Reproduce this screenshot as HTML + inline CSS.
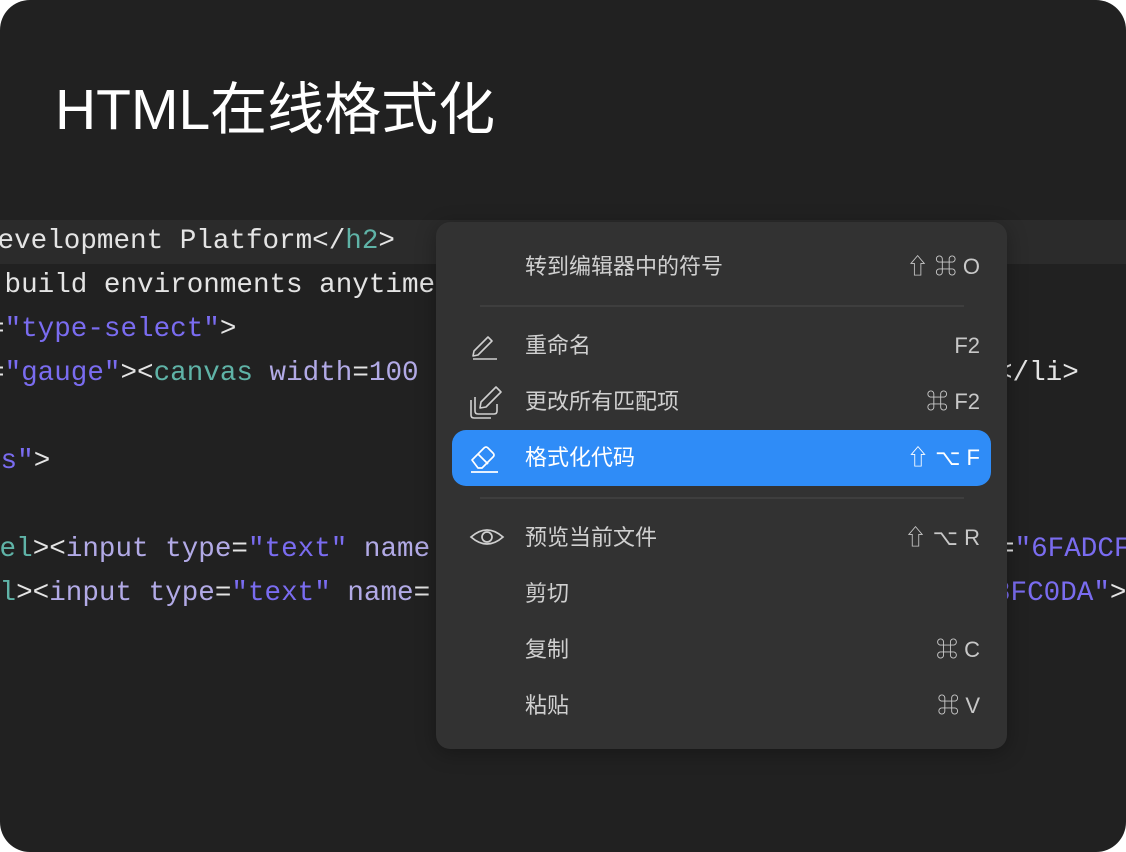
<!DOCTYPE html>
<html><head><meta charset="utf-8"><style>
html,body{margin:0;padding:0;background:#fff;}
.card{position:relative;width:1126px;height:852px;background:#212121;border-radius:30px;overflow:hidden;font-family:"Liberation Sans","Noto Sans CJK SC",sans-serif;}
.title{position:absolute;left:55px;top:64px;font-size:57px;color:#fff;font-family:"Liberation Sans","Noto Sans CJK SC",sans-serif;letter-spacing:0px;}
.cur{position:absolute;left:0;top:220px;width:1126px;height:44px;background:#2b2b2b;}
.code{position:absolute;font-family:"Liberation Mono","DejaVu Sans Mono",monospace;font-size:27.6px;color:#e4e4e4;white-space:pre;line-height:44px;height:44px;}
.t{color:#5fb3a7}.s{color:#7a6cf0}.a{color:#b2aae6}
.menu{position:absolute;left:436px;top:222px;width:571px;height:527px;background:#323232;border-radius:14px;box-shadow:0 4px 20px rgba(0,0,0,.3);}
.item{position:absolute;left:0;width:571px;height:56px;font-size:22px;color:#d0d0d0;}
.item .lab{position:absolute;left:89px;top:0;line-height:56px;}
.item .sc{position:absolute;right:27px;top:0;line-height:56px;color:#c8c8c8;font-size:22px;}
.item svg{position:absolute;left:32px;top:10px;}
.sel{position:absolute;left:16px;top:208px;width:539px;height:56px;background:#2f8cf7;border-radius:14px;}
.sep{position:absolute;left:44px;width:484px;height:2px;background:#3e3e3e;}
</style></head><body>
<div class="card">
<div class="title">HTML在线格式化</div>
<div class="cur"></div>
<div class="code" style="left:-19px;top:220px">Development Platform&lt;/<span class="t">h2</span>&gt;</div>
<div class="code" style="left:-12px;top:264px"> build environments anytime</div>
<div class="code" style="left:-12px;top:308px">=<span class="s">"type-select"</span>&gt;</div>
<div class="code" style="left:-12px;top:352px">=<span class="s">"gauge"</span>&gt;&lt;<span class="t">canvas</span> <span class="a">width</span>=<span class="a">100</span></div>
<div class="code" style="left:996px;top:352px">&lt;/li&gt;</div>
<div class="code" style="left:-16px;top:440px"><span class="s">ts"</span>&gt;</div>
<div class="code" style="left:-17px;top:528px"><span class="t">bel</span>&gt;&lt;<span class="a">input</span> <span class="a">type</span>=<span class="s">"text"</span> <span class="a">name</span></div>
<div class="code" style="left:-17px;top:572px"><span class="t">el</span>&gt;&lt;<span class="a">input</span> <span class="a">type</span>=<span class="s">"text"</span> <span class="a">name</span>=</div>
<div class="code" style="left:998px;top:528px">=<span class="s">"6FADCF</span></div>
<div class="code" style="left:994px;top:572px"><span class="s">8FC0DA"</span>&gt;</div>

<div class="menu">
 <div class="item" style="top:17px"><span class="lab">转到编辑器中的符号</span><span class="sc">⇧ ⌘ O</span></div>
 <div class="sep" style="top:83px"></div>
 <div class="item" style="top:96px">
  <svg width="34" height="34" viewBox="0 0 34 34" fill="none" stroke="#cfcfcf" stroke-width="1.6" stroke-linejoin="round"><path d="M6 23 L20 9 L24 13 L10 27 L5 28 Z"/><path d="M5 31 H29"/></svg>
  <span class="lab">重命名</span><span class="sc">F2</span></div>
 <div class="item" style="top:152px">
  <svg width="40" height="40" viewBox="0 0 40 40" fill="none" stroke="#cfcfcf" stroke-width="1.6" stroke-linejoin="round" style="left:30px;top:6px"><path d="M15 22 L30 7 L35 12 L20 27 L14 28 Z"/><path d="M9 17 V31 Q9 34 12 34 H28 Q31 34 31 31 V24"/><path d="M5 20 V35 Q5 38 8 38 H25"/></svg>
  <span class="lab">更改所有匹配项</span><span class="sc">⌘ F2</span></div>
 <div class="sel"></div>
 <div class="item" style="top:208px;color:#fff">
  <svg width="34" height="34" viewBox="0 0 34 34" fill="none" stroke="#fff" stroke-width="1.7" stroke-linejoin="round"><path d="M4 20 L16 8 Q18 6 20 8 L25 13 Q27 15 25 17 L14 28 H10 Z"/><path d="M10 14 L20 24"/><path d="M3 32 H30"/></svg>
  <span class="lab">格式化代码</span><span class="sc" style="color:#fff">⇧ ⌥ F</span></div>
 <div class="sep" style="top:275px"></div>
 <div class="item" style="top:288px">
  <svg width="36" height="34" viewBox="0 0 36 34" fill="none" stroke="#cfcfcf" stroke-width="1.7" style="left:33px"><path d="M2 17 Q18 3 34 17 Q18 31 2 17 Z"/><circle cx="18" cy="17" r="5"/></svg>
  <span class="lab">预览当前文件</span><span class="sc">⇧ ⌥ R</span></div>
 <div class="item" style="top:344px"><span class="lab">剪切</span></div>
 <div class="item" style="top:400px"><span class="lab">复制</span><span class="sc">⌘ C</span></div>
 <div class="item" style="top:456px"><span class="lab">粘贴</span><span class="sc">⌘ V</span></div>
</div>
</div>
</body></html>
